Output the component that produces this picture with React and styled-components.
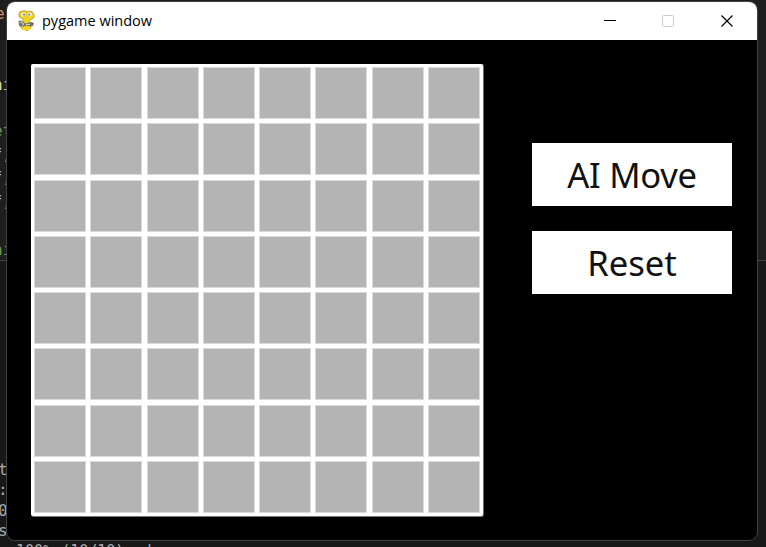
import React from "react";
import styled, { createGlobalStyle } from "styled-components";

const GlobalStyle = createGlobalStyle`
  body { margin: 0; background: #1c1c1c; overflow: hidden; }
`;

const Desktop = styled.main`
  position: relative;
  width: 766px;
  height: 547px;
  overflow: hidden;
  background: #1e1e1e;
`;

const Editor = styled.section`
  box-sizing: border-box;
  height: 261px;
  border-bottom: 1px solid #414141;
  overflow: hidden;
`;

const Terminal = styled.section`
  height: 286px;
  overflow: hidden;
  background: #181818;
`;

const CodeLine = styled.div`
  height: ${(p) => p.$h || 23.5}px;
  line-height: ${(p) => p.$h || 23.5}px;
  margin-top: ${(p) => p.$gap || 0}px;
  margin-left: ${(p) => p.$x || 0}px;
  color: ${(p) => p.$color || "#a9a9a9"};
  font-family: "DejaVu Sans Mono", monospace;
  font-size: ${(p) => p.$size || 16}px;
  white-space: pre;
`;

const Window = styled.section`
  position: absolute;
  left: 6px;
  top: 1px;
  box-sizing: border-box;
  width: 752px;
  height: 540px;
  display: flex;
  flex-direction: column;
  border: 1px solid #424242;
  border-radius: 9px;
  overflow: hidden;
  background: #000;
`;

const TitleBar = styled.header`
  height: 38px;
  flex: none;
  display: flex;
  align-items: center;
  padding-right: 1px;
  background: #fff;
`;

const Logo = styled.svg`
  margin-left: 10px;
  flex: none;
`;

const Title = styled.h1`
  margin: 0 auto 0 6px;
  color: #000;
  font: 400 14.5px/20px "Open Sans", sans-serif;
  white-space: nowrap;
`;

const WindowButton = styled.button`
  width: 58.5px;
  height: 38px;
  padding: 0;
  display: grid;
  place-items: center;
  border: 0;
  background: transparent;
  color: ${(p) => (p.disabled ? "#cbcbcb" : "#000")};
`;

const Client = styled.div`
  flex: 1;
  display: flex;
  align-items: flex-start;
  padding: 24px 0 0 24px;
`;

const Board = styled.div`
  box-sizing: border-box;
  width: 452px;
  height: 452px;
  padding: 3px;
  display: grid;
  grid-template-columns: repeat(8, 52px);
  grid-auto-rows: 52px;
  gap: 4.25px;
  border-radius: 2px;
  background: #fff;
  box-shadow: 0.5px 0.5px 0 0.4px #777;
`;

const Cell = styled.div`
  box-sizing: border-box;
  border: 1px solid #dadada;
  background: #b4b4b4;
`;

const Actions = styled.div`
  display: flex;
  flex-direction: column;
  gap: 25px;
  margin: 79px 0 0 49px;
`;

const ActionButton = styled.button`
  width: 200px;
  height: 63px;
  padding: 1px 0 0;
  border: 0;
  background: #fff;
  color: #111;
  font: 400 34.6px/58px "Noto Sans", sans-serif;
  letter-spacing: ${(p) => p.$tracking || 0}px;
`;

function Snake() {
  return (
    <Logo width="19" height="22" viewBox="0 0 19 22">
      <path d="M4 8Q1 7 2 4Q2 1 6 1Q9 0 10 2Q15 0 16 3Q19 7 15 9Q12 10 12 11L14 14Q15 19 10 20.5L5 19Q2 16 6 12L6 9Z" fill="#f0d41c" stroke="#9c8a1c" strokeWidth=".7" />
      <circle cx="6.2" cy="4.6" r="2.1" fill="#e8e8dc" />
      <circle cx="12.8" cy="4.6" r="2.1" fill="#e8e8dc" />
      <circle cx="7" cy="4.7" r=".8" fill="#555" />
      <circle cx="12.2" cy="4.7" r=".8" fill="#555" />
      <path d="M1.5 11Q4 9.500 6 12L9 13.500L14 12L17 13L16 16L13 16.500L9 15.500L6 17L2 16Z" fill="#77756b" />
      <path d="M3 12L7 14L5 16M9 14.500H13" fill="none" stroke="#d2d0c7" />
      <path d="M14 14H16" stroke="#b54c4c" strokeWidth="1.6" />
      <path d="M5 17.500Q9 21 13 17.500" fill="none" stroke="#f5dc16" strokeWidth="2.4" />
    </Logo>
  );
}

export default function App() {
  return (
    <Desktop>
      <GlobalStyle />
      <Editor>
        <CodeLine $gap={2} $x={-5} $color="#ce9178">ep</CodeLine>
        <CodeLine $gap={47} $x={-7} $color="#dcdcaa">ni</CodeLine>
        <CodeLine $gap={23} $x={-7} $color="#6a9955">et</CodeLine>
        <CodeLine $x={-7.5} $color="#9cdcfe">f,</CodeLine>
        <CodeLine $x={-7.5} $color="#9cdcfe">f,</CodeLine>
        <CodeLine $x={-7.5} $color="#9cdcfe">f,</CodeLine>
        <CodeLine $gap={25} $x={-7} $color="#6a9955">ni</CodeLine>
      </Editor>
      <Terminal>
        <CodeLine $gap={199} $h={20.3} $x={-2}>t</CodeLine>
        <CodeLine $h={20.3} $x={-2}>:</CodeLine>
        <CodeLine $h={20.3} $x={-2}>0</CodeLine>
        <CodeLine $h={20.3} $x={-2}>s</CodeLine>
        <CodeLine $h={20.3} $x={16} $size={15}>100% (10/10), d</CodeLine>
      </Terminal>
      <Window>
        <TitleBar>
          <Snake />
          <Title>pygame window</Title>
          <WindowButton aria-label="Minimize">
            <svg width="12" height="12"><path d="M0 5.5H12" stroke="currentColor" /></svg>
          </WindowButton>
          <WindowButton aria-label="Maximize" disabled>
            <svg width="12" height="12"><rect x=".5" y=".5" width="11" height="11" rx="1" fill="none" stroke="currentColor" /></svg>
          </WindowButton>
          <WindowButton aria-label="Close">
            <svg width="12" height="12"><path d="M.5 .5L11.5 11.5M11.5 .5L.5 11.5" stroke="currentColor" strokeWidth="1.2" /></svg>
          </WindowButton>
        </TitleBar>
        <Client>
          <Board>
            {Array.from({ length: 64 }, (_, i) => <Cell key={i} />)}
          </Board>
          <Actions>
            <ActionButton $tracking={-0.3}>AI Move</ActionButton>
            <ActionButton>Reset</ActionButton>
          </Actions>
        </Client>
      </Window>
    </Desktop>
  );
}
